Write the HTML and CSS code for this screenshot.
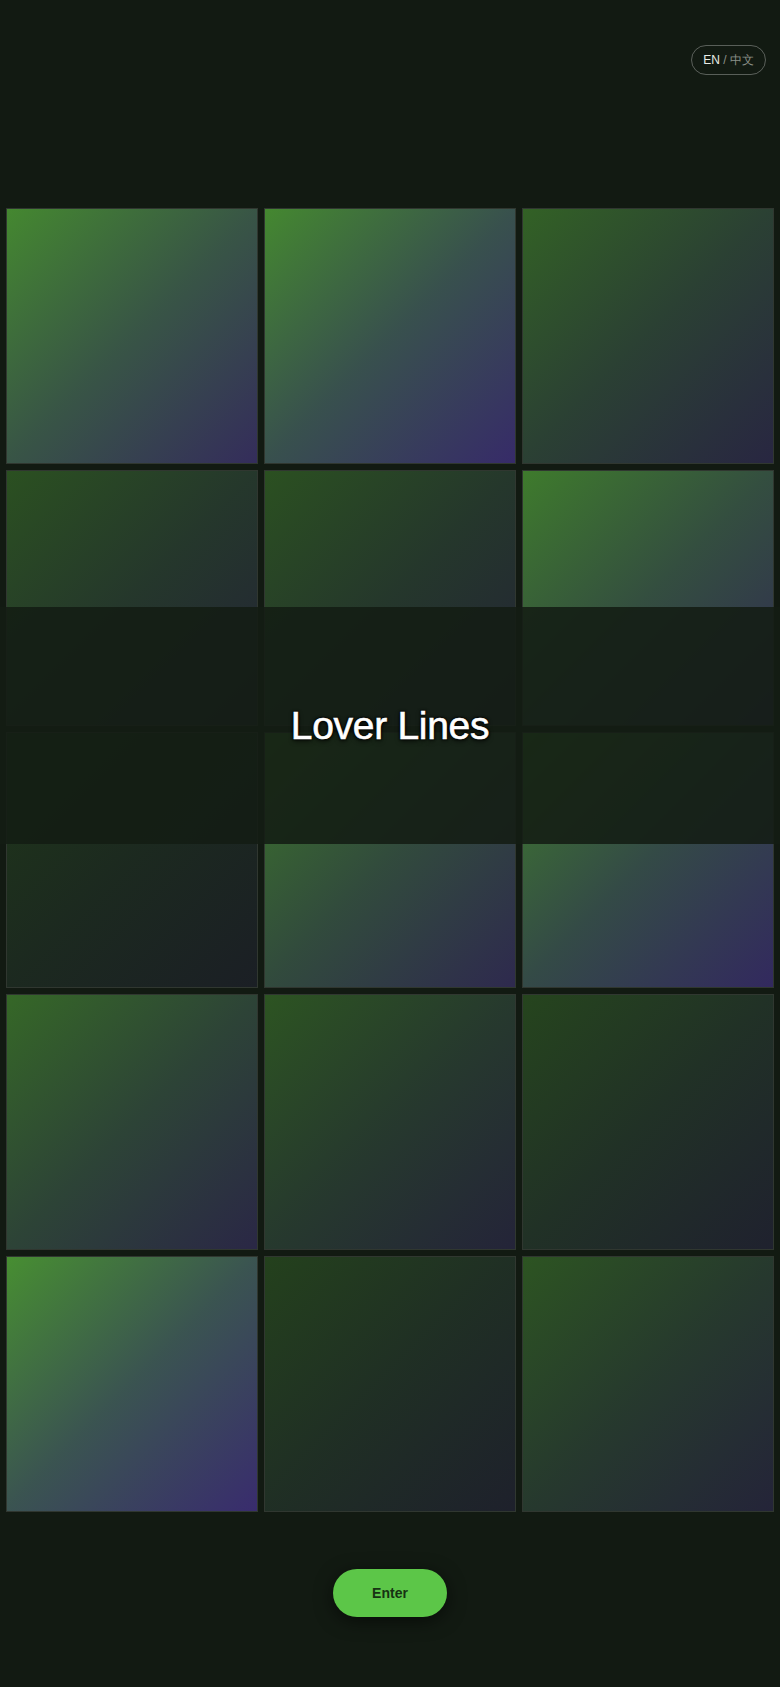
FILE: index.html
```html
<!DOCTYPE html>
<html>
	<head>
		<meta charset="utf-8">
		<title>Lover Lines</title>
	<link rel="stylesheet" href="styles.css">
	</head>
<body>

<div id="lang">
	<span class="on">EN</span> / <span>中文</span>
</div>

<div id="page">
	<div id="stage">
		<div id="grid">
			<div class="tile" style="--o:0.85"></div>
			<div class="tile purple" style="--o:0.85"></div>
			<div class="tile" style="--o:0.55"></div>

			<div class="tile" style="--o:0.42"></div>
			<div class="tile" style="--o:0.42"></div>
			<div class="tile" style="--o:0.75"></div>

			<div class="tile" style="--o:0.22"></div>
			<div class="tile" style="--o:0.7"></div>
			<div class="tile purple" style="--o:0.75"></div>

			<div class="tile" style="--o:0.6"></div>
			<div class="tile" style="--o:0.45"></div>
			<div class="tile" style="--o:0.33"></div>

			<div class="tile purple" style="--o:0.9"></div>
			<div class="tile" style="--o:0.3"></div>
			<div class="tile" style="--o:0.45"></div>
		</div>
		<div id="banner">
			<h1>Lover Lines</h1>
		</div>
	</div>
	<div id="actions">
		<button id="enter" type="button">Enter</button>
	</div>
</div>

</body>
</html>
```

FILE: styles.css
```css
html, body {
	margin:0px;
	padding:0px;
}
body {
	background-color:#121a12;
	font-family:"Liberation Sans", Arial, sans-serif;
	color:#ffffff;
}

/*language toggle*/
#lang {
	position:absolute;
	top:45px;
	right:14px;

	padding:0px 11px;
	height:28px;
	line-height:28px;

	font-size:12px;
	color:#8a9088;
	border:1px solid rgba(255,255,255,0.3);
	border-radius:15px;
}
#lang .on {
	color:#e8ece6;
}

#page {
	padding:208px 6px 70px 6px;
}
#stage {
	position:relative;
}
#grid {
	display:grid;
	grid-template-columns:1fr 1fr 1fr;
	grid-auto-rows:256px;
	gap:6px;
}
.tile {
	position:relative;
	box-sizing:border-box;
	border:1px solid rgba(255,255,255,0.13);
}
.tile::before {
	content:"";
	position:absolute;
	top:0px;
	left:0px;
	right:0px;
	bottom:0px;
	opacity:var(--o);
	background:linear-gradient(135deg, #4d9b35 0%, #3f5f4f 50%, #3a3068 100%);
}
.tile.purple::before {
	background:linear-gradient(135deg, #4d9b35 0%, #3f5a58 50%, #3d2e78 100%);
}

/*title band over the grid*/
#banner {
	position:absolute;
	left:-6px;
	right:-6px;
	top:399px;
	height:237px;

	display:flex;
	align-items:center;
	justify-content:center;

	background-color:rgba(19,28,19,0.88);
}
#banner h1 {
	margin:0px;
	font-size:39px;
	font-weight:normal;
	letter-spacing:-0.3px;
	color:#ffffff;
	-webkit-text-stroke:0.6px #ffffff;
	text-shadow:0 0 2px #000, 0 0 2px #000, 0 0 3px #000, 0 2px 5px rgba(0,0,0,0.8);
}

#actions {
	display:flex;
	justify-content:center;
	margin-top:57px;
}
#enter {
	width:114px;
	height:48px;
	padding:0px;

	font-family:"Liberation Sans", Arial, sans-serif;
	font-size:14px;
	font-weight:bold;
	color:#173313;
	background-color:#5cc648;
	border:none;
	border-radius:24px;
	box-shadow:0 4px 18px rgba(0,0,0,0.55);
}
```
